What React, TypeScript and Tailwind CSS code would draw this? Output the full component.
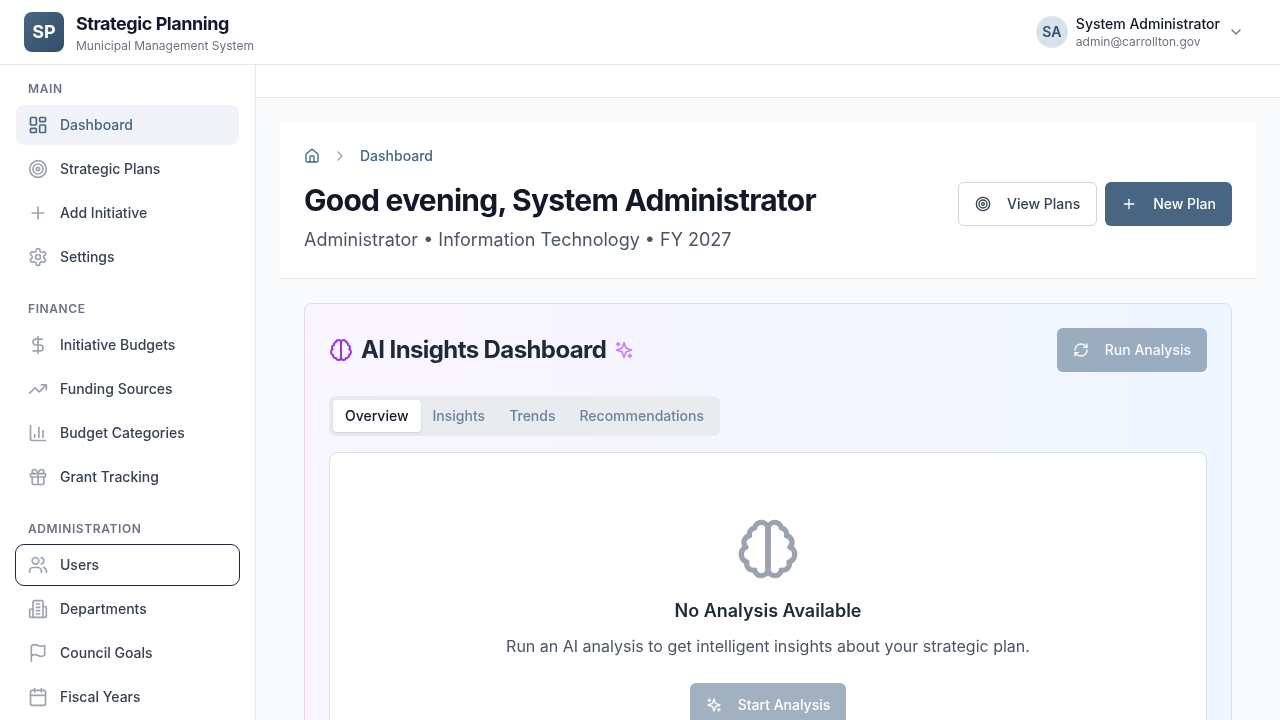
import React from 'react';
import {
  BarChart3,
  Calendar,
  ChevronDown,
  ChevronRight,
  DollarSign,
  Flag,
  Gift,
  Home,
  LayoutDashboard,
  Plus,
  RefreshCw,
  Target,
  TrendingUp,
  Users,
} from 'lucide-react';

type IconProps = { className?: string; strokeWidth?: number };

const Svg: React.FC<IconProps & { children: React.ReactNode }> = ({ className, strokeWidth = 2, children }) => (
  <svg viewBox="0 0 24 24" fill="none" stroke="currentColor" strokeWidth={strokeWidth} strokeLinecap="round" strokeLinejoin="round" className={className}>
    {children}
  </svg>
);

const BrainIcon: React.FC<IconProps> = (props) => (
  <Svg {...props}>
    <path d="M9.5 2A2.5 2.5 0 0 1 12 4.5v15a2.5 2.5 0 0 1-4.96.44 2.5 2.5 0 0 1-2.96-3.08 3 3 0 0 1-.34-5.58 2.5 2.5 0 0 1 1.32-4.24 2.5 2.5 0 0 1 1.98-3A2.5 2.5 0 0 1 9.5 2Z" />
    <path d="M14.5 2A2.5 2.5 0 0 0 12 4.5v15a2.5 2.5 0 0 0 4.96.44 2.5 2.5 0 0 0 2.96-3.08 3 3 0 0 0 .34-5.58 2.5 2.5 0 0 0-1.32-4.24 2.5 2.5 0 0 0-1.98-3A2.5 2.5 0 0 0 14.5 2Z" />
  </Svg>
);

const SparklesIcon: React.FC<IconProps> = (props) => (
  <Svg {...props}>
    <path d="m12 3-1.912 5.813a2 2 0 0 1-1.275 1.275L3 12l5.813 1.912a2 2 0 0 1 1.275 1.275L12 21l1.912-5.813a2 2 0 0 1 1.275-1.275L21 12l-5.813-1.912a2 2 0 0 1-1.275-1.275L12 3Z" />
    <path d="M5 3v4" />
    <path d="M19 17v4" />
    <path d="M3 5h4" />
    <path d="M17 19h4" />
  </Svg>
);

const SettingsIcon: React.FC<IconProps> = (props) => (
  <Svg {...props}>
    <path d="M12.22 2h-.44a2 2 0 0 0-2 2v.18a2 2 0 0 1-1 1.73l-.43.25a2 2 0 0 1-2 0l-.15-.08a2 2 0 0 0-2.73.73l-.22.38a2 2 0 0 0 .73 2.73l.15.1a2 2 0 0 1 1 1.72v.51a2 2 0 0 1-1 1.74l-.15.09a2 2 0 0 0-.73 2.73l.22.38a2 2 0 0 0 2.73.73l.15-.08a2 2 0 0 1 2 0l.43.25a2 2 0 0 1 1 1.73V20a2 2 0 0 0 2 2h.44a2 2 0 0 0 2-2v-.18a2 2 0 0 1 1-1.73l.43-.25a2 2 0 0 1 2 0l.15.08a2 2 0 0 0 2.73-.73l.22-.39a2 2 0 0 0-.73-2.73l-.15-.08a2 2 0 0 1-1-1.74v-.5a2 2 0 0 1 1-1.74l.15-.09a2 2 0 0 0 .73-2.73l-.22-.38a2 2 0 0 0-2.73-.73l-.15.08a2 2 0 0 1-2 0l-.43-.25a2 2 0 0 1-1-1.73V4a2 2 0 0 0-2-2z" />
    <circle cx="12" cy="12" r="3" />
  </Svg>
);

const BuildingIcon: React.FC<IconProps> = (props) => (
  <Svg {...props}>
    <path d="M6 22V4a2 2 0 0 1 2-2h8a2 2 0 0 1 2 2v18Z" />
    <path d="M6 12H4a2 2 0 0 0-2 2v6a2 2 0 0 0 2 2h2" />
    <path d="M18 9h2a2 2 0 0 1 2 2v9a2 2 0 0 1-2 2h-2" />
    <path d="M10 6h4" />
    <path d="M10 10h4" />
    <path d="M10 14h4" />
    <path d="M10 18h4" />
  </Svg>
);

const sections = [
  {
    label: 'Main',
    items: [
      { name: 'Dashboard', icon: LayoutDashboard, active: true },
      { name: 'Strategic Plans', icon: Target },
      { name: 'Add Initiative', icon: Plus },
      { name: 'Settings', icon: SettingsIcon },
    ],
  },
  {
    label: 'Finance',
    items: [
      { name: 'Initiative Budgets', icon: DollarSign },
      { name: 'Funding Sources', icon: TrendingUp },
      { name: 'Budget Categories', icon: BarChart3 },
      { name: 'Grant Tracking', icon: Gift },
    ],
  },
  {
    label: 'Administration',
    items: [
      { name: 'Users', icon: Users, focused: true },
      { name: 'Departments', icon: BuildingIcon },
      { name: 'Council Goals', icon: Flag },
      { name: 'Fiscal Years', icon: Calendar },
    ],
  },
];

const Sidebar = () => (
  <aside className="w-[256px] shrink-0 border-r border-[#e5e7eb] bg-white overflow-hidden">
    <div className="flex flex-col gap-[24px] px-[16px] pt-[16px]">
      {sections.map((section) => (
        <div key={section.label}>
          <div className="px-[12px] h-[16px] mb-[8px] flex items-center text-xs font-semibold uppercase tracking-wider text-[#6b7280]">
            {section.label}
          </div>
          <div className="flex flex-col gap-[4px]">
            {section.items.map((item) => {
              const Icon = item.icon;
              return (
                <div
                  key={item.name}
                  className={`flex items-center gap-[12px] h-[40px] px-[12px] rounded-lg text-sm font-medium ${
                    item.active ? 'bg-[#f0f4f8] text-[#486581]' : 'text-[#374151]'
                  } ${item.focused ? 'outline outline-1 outline-[#1f2937] outline-offset-0' : ''}`}
                >
                  <Icon className={`w-[20px] h-[20px] ${item.active ? 'text-[#486581]' : 'text-[#9ca3af]'}`} strokeWidth={2} />
                  {item.name}
                </div>
              );
            })}
          </div>
        </div>
      ))}
    </div>
  </aside>
);

const Header = () => (
  <header className="h-[65px] shrink-0 flex items-center justify-between pl-[24px] pr-[36px] bg-white border-b border-[#e5e7eb]">
    <div className="flex items-center gap-[12px]">
      <div className="w-[40px] h-[40px] rounded-lg bg-gradient-to-br from-[#486581] to-[#334e68] flex items-center justify-center text-white font-bold text-lg">
        SP
      </div>
      <div>
        <div className="text-lg font-bold text-[#111827] leading-[28px] tracking-tight">Strategic Planning</div>
        <div className="text-xs text-[#6b7280] leading-[16px]">Municipal Management System</div>
      </div>
    </div>
    <div className="flex items-center gap-[8px]">
      <div className="w-[32px] h-[32px] rounded-full bg-[#d9e2ec] flex items-center justify-center text-sm font-semibold text-[#334e68]">
        SA
      </div>
      <div>
        <div className="text-sm font-medium text-[#111827] leading-[20px]">System Administrator</div>
        <div className="text-xs text-[#6b7280] leading-[16px]">admin@carrollton.gov</div>
      </div>
      <ChevronDown className="w-[16px] h-[16px] text-[#6b7280]" />
    </div>
  </header>
);

const PageHeader = () => (
  <div className="bg-white border-b border-[#e5e7eb] p-[24px]">
    <div className="flex items-center gap-[12px] h-[20px] text-sm font-medium text-[#486581]">
      <Home className="w-[16px] h-[16px]" />
      <ChevronRight className="w-[16px] h-[16px] text-[#9ca3af]" />
      <span>Dashboard</span>
    </div>
    <div className="flex items-start justify-between mt-[16px]">
      <div>
        <h1 className="text-3xl font-bold text-[#111827] leading-[36px] tracking-tight">Good evening, System Administrator</h1>
        <p className="text-lg text-[#4b5563] leading-[28px] mt-[8px]">Administrator • Information Technology • FY 2027</p>
      </div>
      <div className="flex items-center gap-[8px]">
        <button className="flex items-center gap-[16px] h-[44px] px-[16px] rounded-md border border-[#d1d5db] bg-white text-sm font-medium text-[#374151]">
          <Target className="w-[16px] h-[16px]" />
          View Plans
        </button>
        <button className="flex items-center gap-[16px] h-[44px] px-[16px] rounded-md bg-[#486581] text-sm font-medium text-white">
          <Plus className="w-[16px] h-[16px]" />
          New Plan
        </button>
      </div>
    </div>
  </div>
);

const InsightsCard = () => (
  <div className="mt-[24px] mx-[48px] rounded-lg border border-[#e9d5ff] bg-gradient-to-r from-[#faf5ff] to-[#eff6ff] p-[24px]">
    <div className="flex items-center justify-between">
      <div className="flex items-center gap-[8px]">
        <BrainIcon className="w-[24px] h-[24px] text-[#9333ea]" />
        <h2 className="text-2xl font-bold text-[#1f2937] tracking-tight">AI Insights Dashboard</h2>
        <SparklesIcon className="w-[20px] h-[20px] text-[#c084fc]" />
      </div>
      <button className="flex items-center gap-[16px] h-[44px] px-[16px] rounded-md bg-[#486581] opacity-50 text-sm font-medium text-white">
        <RefreshCw className="w-[16px] h-[16px]" />
        Run Analysis
      </button>
    </div>
    <div className="inline-flex items-center h-[40px] p-[4px] mt-[24px] rounded-md bg-[#e9ecef] text-sm font-medium text-[#6f8299]">
      <div className="px-[12px] py-[6px] rounded-sm bg-white text-[#111827] shadow-sm">Overview</div>
      <div className="px-[12px] py-[6px]">Insights</div>
      <div className="px-[12px] py-[6px]">Trends</div>
      <div className="px-[12px] py-[6px]">Recommendations</div>
    </div>
    <div className="mt-[16px] rounded-lg border border-[#d9dee8] bg-white pt-[64px] pb-[64px] flex flex-col items-center text-center">
      <BrainIcon className="w-[64px] h-[64px] text-[#9ca3af]" />
      <h3 className="mt-[16px] text-lg font-semibold text-[#1f2937] leading-[28px]">No Analysis Available</h3>
      <p className="mt-[9px] text-base text-[#4b5563] leading-[24px]">Run an AI analysis to get intelligent insights about your strategic plan.</p>
      <button className="mt-[25px] flex items-center gap-[16px] h-[44px] px-[16px] rounded-md bg-[#486581] opacity-50 text-sm font-medium text-white">
        <SparklesIcon className="w-[16px] h-[16px]" />
        Start Analysis
      </button>
    </div>
  </div>
);

export default function App() {
  return (
    <div className="h-screen flex flex-col overflow-hidden bg-white antialiased [will-change:transform]" style={{ fontFamily: 'Inter, sans-serif' }}>
      <Header />
      <div className="flex flex-1 min-h-0">
        <Sidebar />
        <main className="flex-1 min-w-0 overflow-hidden bg-[#f9fafb]">
          <div className="h-[33px] bg-white border-b border-[#e5e7eb]" />
          <div className="pt-[24px] px-[24px]">
            <PageHeader />
          </div>
          <InsightsCard />
        </main>
      </div>
    </div>
  );
}
